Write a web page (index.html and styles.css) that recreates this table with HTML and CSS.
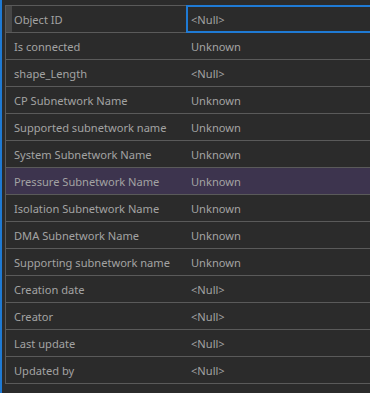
FILE: index.html
```html
<!DOCTYPE html>
<html lang="en">
<head>
  <meta charset="UTF-8" />
  <title>Attributes</title>
  <link rel="stylesheet" href="styles.css">
</head>
<body>
  <div class="pane">
    <!-- 屬性表格 -->
    <div class="grid">
      <div class="row active">
        <div class="name">Object ID</div>
        <div class="value focus">&lt;Null&gt;</div>
      </div>
      <div class="row"><div class="name">Is connected</div><div class="value">Unknown</div></div>
      <div class="row"><div class="name">shape_Length</div><div class="value">&lt;Null&gt;</div></div>
      <div class="row"><div class="name">CP Subnetwork Name</div><div class="value">Unknown</div></div>
      <div class="row"><div class="name">Supported subnetwork name</div><div class="value">Unknown</div></div>
      <div class="row"><div class="name">System Subnetwork Name</div><div class="value">Unknown</div></div>
      <div class="row hover"><div class="name">Pressure Subnetwork Name</div><div class="value">Unknown</div></div>
      <div class="row"><div class="name">Isolation Subnetwork Name</div><div class="value">Unknown</div></div>
      <div class="row"><div class="name">DMA Subnetwork Name</div><div class="value">Unknown</div></div>
      <div class="row"><div class="name">Supporting subnetwork name</div><div class="value">Unknown</div></div>
      <div class="row"><div class="name">Creation date</div><div class="value">&lt;Null&gt;</div></div>
      <div class="row"><div class="name">Creator</div><div class="value">&lt;Null&gt;</div></div>
      <div class="row"><div class="name">Last update</div><div class="value">&lt;Null&gt;</div></div>
      <div class="row"><div class="name">Updated by</div><div class="value">&lt;Null&gt;</div></div>
    </div>
  </div>
</body>
</html>
```

FILE: styles.css
```css
  html, body {
    margin: 0;
    height: 100%;
    background-color: #2b2b2b;
  }

  body {
    font-family: 'Noto Sans', 'Liberation Sans', sans-serif;
    font-size: 11.1px;
    color: #a3a3a3;
    overflow: hidden;
  }

  .pane {
    height: 100%;
    border-left: 2px solid #1f7ad4;
    padding: 5px 0 0 3px;
    box-sizing: border-box;
  }

  .grid {
    border-top: 1px solid #5a5a5a;
    border-left: 1px solid #5a5a5a;
  }

  .row {
    display: grid;
    grid-template-columns: 180px 1fr;
    height: 26px;
    border-bottom: 1px solid #5a5a5a;
    position: relative;
  }

  .row.active .name {
    border-left: 6px solid #474747;
    padding-left: 2px;
  }

  .row.hover {
    background-color: #3d344e;
  }

  .name, .value {
    display: flex;
    align-items: center;
    white-space: nowrap;
  }

  .name {
    padding-left: 8px;
  }

  .value {
    padding-left: 5px;
  }

  /* 目前選取的儲存格 */
  .focus::after {
    content: "";
    position: absolute;
    left: 180px;
    right: -4px;
    top: -1px;
    bottom: -1px;
    border: 2px solid #1f7ad4;
  }
```
